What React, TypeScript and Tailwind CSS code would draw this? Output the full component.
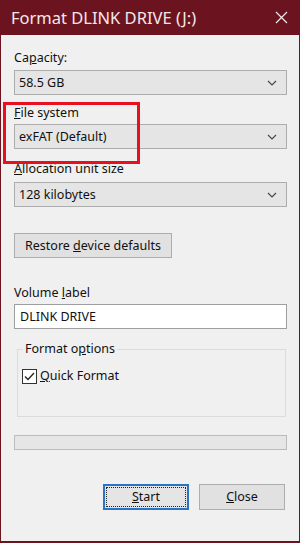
import React from 'react';

function Chevron() {
  return (
    <svg width="10" height="6" viewBox="0 0 10 6" className="shrink-0">
      <path d="M1 1 L5 5 L9 1" fill="none" stroke="#444" strokeWidth="1.1" />
    </svg>
  );
}

function Dropdown({ value }: { value: string }) {
  return (
    <div className="h-[25px] flex items-center justify-between bg-[#e5e5e5] border border-[#adadad] pl-[4px] pr-[9px]">
      <span>{value}</span>
      <Chevron />
    </div>
  );
}

export default function App() {
  return (
    <div
      className="relative w-[300px] h-[543px] bg-[#6b1420] text-[12.5px] text-[#111] leading-[16px]"
      style={{ fontFamily: '"Noto Sans", "Open Sans", Arial, sans-serif' }}
    >
      {/* Title bar */}
      <div className="h-[35px] flex items-center justify-between pl-[11px] pr-[12px] text-[#f6e8ea] text-[16.5px]">
        <span>Format DLINK DRIVE (J:)</span>
        <svg width="13" height="13" viewBox="0 0 13 13">
          <path d="M1 1 L12 12 M12 1 L1 12" stroke="#f6e8ea" strokeWidth="1.2" />
        </svg>
      </div>

      {/* Body */}
      <div className="mx-[1px] h-[506px] bg-[#f0f0f0] pl-[13px] pr-[12px] flex flex-col">
        <div className="mt-[15px]">
          Ca<u>p</u>acity:
        </div>
        <div className="mt-[4px]">
          <Dropdown value="58.5 GB" />
        </div>

        <div className="mt-[10px]">
          <u>F</u>ile system
        </div>
        <div className="mt-[3px]">
          <Dropdown value="exFAT (Default)" />
        </div>

        <div className="mt-[12px]">
          <u>A</u>llocation unit size
        </div>
        <div className="mt-[5px]">
          <Dropdown value="128 kilobytes" />
        </div>

        <div className="mt-[26px]">
          <div className="w-[158px] h-[25px] flex items-center justify-center bg-[#e1e1e1] border border-[#adadad]">
            <span>
              Restore <u>d</u>evice defaults
            </span>
          </div>
        </div>

        <div className="mt-[27px]">
          Volume <u>l</u>abel
        </div>
        <div className="mt-[3px] h-[25px] flex items-center bg-white border border-[#9e9e9e] pl-[5px]">
          DLINK DRIVE
        </div>

        <div className="mt-[20px] ml-[3px] mr-[1px] h-[68px] border border-[#dcdcdc] relative">
          <span className="absolute -top-[9px] left-[5px] bg-[#f0f0f0] px-[2px]">
            Format o<u>p</u>tions
          </span>
          <div className="mt-[18px] ml-[4px] flex items-center gap-[3px]">
            <div className="w-[15px] h-[15px] bg-white border border-[#333] flex items-center justify-center">
              <svg width="11" height="9" viewBox="0 0 11 9">
                <path d="M1 4.5 L4 7.5 L10 1" fill="none" stroke="#222" strokeWidth="1.3" />
              </svg>
            </div>
            <span>
              <u>Q</u>uick Format
            </span>
          </div>
        </div>

        <div className="mt-[18px] h-[15px] bg-[#e6e6e6] border border-[#bcbcbc]" />

        <div className="mt-[34px] flex justify-end gap-[10px] pr-[2px]">
          <div className="w-[86px] h-[26px] border-2 border-[#2a74c4] bg-[#e5e5e5] p-[1px]">
            <div className="w-full h-full border border-dotted border-[#222] flex items-center justify-center">
              <span>
                <u>S</u>tart
              </span>
            </div>
          </div>
          <div className="w-[86px] h-[26px] border border-[#adadad] bg-[#e1e1e1] flex items-center justify-center">
            <span>
              <u>C</u>lose
            </span>
          </div>
        </div>
      </div>

      {/* Red highlight annotation */}
      <div className="absolute left-[3px] top-[102px] w-[137px] h-[62px] border-[3px] border-[#e6101e]" />
    </div>
  );
}
